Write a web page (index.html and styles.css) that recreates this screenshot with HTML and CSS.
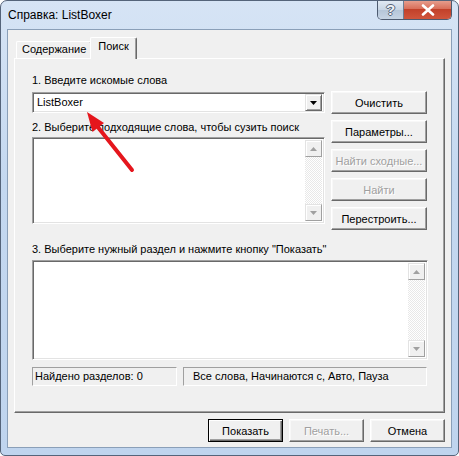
FILE: index.html
```html
<!DOCTYPE html>
<html lang="ru">
<head>
<meta charset="utf-8">
<title>Справка: ListBoxer</title>
<link rel="stylesheet" href="styles.css">
</head>
<body>
<div class="window">
  <div class="titlebar">
    <span class="title">Справка: ListBoxer</span>
    <div class="caption-btns">
      <div class="cbtn help">?</div>
      <div class="cbtn close">
        <svg width="16" height="12" viewBox="0 0 16 12"><path d="M3 1.5 L13 10.5 M13 1.5 L3 10.5" stroke="#fff" stroke-width="2.6" stroke-linecap="round"/></svg>
      </div>
    </div>
  </div>
  <div class="client">
    <div class="tabs">
      <div class="tab">Содержание</div>
      <div class="tab active">Поиск</div>
    </div>
    <div class="panel">
      <div class="top">
        <div class="leftcol">
          <div class="label l1">1. Введите искомые слова</div>
          <div class="combo sunken">
            <span class="combo-text">ListBoxer</span>
            <div class="drop"><svg width="7" height="4" viewBox="0 0 7 4"><path d="M0 0 H7 L3.5 4 Z" fill="#000"/></svg></div>
          </div>
          <div class="label l2">2. Выберите подходящие слова, чтобы сузить поиск</div>
          <div class="listbox lb2 sunken">
            <div class="vscroll">
              <div class="sbtn"><svg width="7" height="4" viewBox="0 0 7 4"><path d="M3.5 0 L7 4 H0 Z" fill="#a0a0a0"/></svg></div>
              <div class="track"></div>
              <div class="sbtn"><svg width="7" height="4" viewBox="0 0 7 4"><path d="M0 0 H7 L3.5 4 Z" fill="#a0a0a0"/></svg></div>
            </div>
          </div>
        </div>
        <div class="rightcol">
          <div class="btn">Очистить</div>
          <div class="btn">Параметры...</div>
          <div class="btn disabled">Найти сходные...</div>
          <div class="btn disabled">Найти</div>
          <div class="btn">Перестроить...</div>
        </div>
      </div>
      <div class="label l3">3. Выберите нужный раздел и нажмите кнопку "Показать"</div>
      <div class="listbox lb3 sunken">
        <div class="vscroll">
          <div class="sbtn"><svg width="7" height="4" viewBox="0 0 7 4"><path d="M3.5 0 L7 4 H0 Z" fill="#a0a0a0"/></svg></div>
          <div class="track"></div>
          <div class="sbtn"><svg width="7" height="4" viewBox="0 0 7 4"><path d="M0 0 H7 L3.5 4 Z" fill="#a0a0a0"/></svg></div>
        </div>
      </div>
      <div class="status">
        <div class="sbox s1">Найдено разделов: 0</div>
        <div class="sbox s2">Все слова, Начинаются с, Авто, Пауза</div>
      </div>
    </div>
    <div class="bottom">
      <div class="btn wide default">Показать</div>
      <div class="btn wide disabled">Печать...</div>
      <div class="btn wide">Отмена</div>
    </div>
  </div>
  <svg class="arrow" width="459" height="456" viewBox="0 0 459 456">
    <line x1="97" y1="126" x2="132" y2="170" stroke="#e5161d" stroke-width="4" stroke-linecap="round"/>
    <path d="M87 112 L104 123 L92.5 132 Z" fill="#e5161d"/>
  </svg>
</div>
</body>
</html>
```

FILE: styles.css
```css
* { box-sizing: border-box; }
html, body { margin: 0; padding: 0; background: #ffffff; }
body {
  font-family: "Liberation Sans", Arial, sans-serif;
  font-size: 11px;
  color: #000;
}
.window {
  position: relative;
  width: 459px;
  height: 456px;
  border: 1px solid #55647a;
  border-radius: 7px 7px 5px 5px;
  background: linear-gradient(#d6e4f5, #c4d8f0 40%, #bfd4ee);
  padding: 0 6px 7px 6px;
  display: flex;
  flex-direction: column;
  overflow: hidden;
}
.titlebar {
  height: 28px;
  flex: none;
  display: flex;
  align-items: flex-start;
}
.title {
  font-size: 12px;
  padding-left: 1px;
  margin-top: 7px;
  line-height: 15px;
  color: #000;
}
.caption-btns {
  margin-left: auto;
  margin-top: -1px;
  display: flex;
  height: 20px;
  border: 1px solid #4d5b70;
  border-top: none;
  border-radius: 0 0 5px 5px;
  overflow: hidden;
}
.cbtn {
  height: 19px;
  display: flex;
  align-items: center;
  justify-content: center;
}
.help {
  width: 26px;
  background: linear-gradient(#e3ebf4, #c9d6e5 50%, #b4c5d8 51%, #c6d4e4);
  border-right: 1px solid #6e7d92;
  color: #eef2f7;
  font-size: 15px;
  font-weight: bold;
  text-shadow: 1px 0 0 #5a6678, -1px 0 0 #5a6678, 0 1px 0 #5a6678, 0 -1px 0 #5a6678;
}
.close {
  width: 47px;
  background: linear-gradient(#e8a393, #d9705b 45%, #c2412a 50%, #d0553c);
}
.client {
  flex: 1;
  background: #f0f0f0;
  border: 1px solid #8a9fb8;
  display: flex;
  flex-direction: column;
  padding: 7px 6px 5px 6px;
}
.tabs {
  display: flex;
  height: 21px;
  align-items: flex-end;
  padding-left: 2px;
  position: relative;
  z-index: 1;
}
.tab {
  height: 17px;
  padding: 0 5px;
  border: 1px solid #fff;
  border-right-color: #696969;
  border-bottom: none;
  box-shadow: inset -1px 0 0 #a0a0a0;
  border-radius: 2px 2px 0 0;
  background: #f0f0f0;
  line-height: 15px;
}
.tab.active {
  margin-left: -2px;
  padding: 0 7px;
  line-height: 16px;
  margin-bottom: -1px;
  height: 22px;
}
.panel {
  height: 355px;
  flex: none;
  border: 1px solid;
  border-color: #fff #696969 #696969 #fff;
  box-shadow: inset -1px -1px 0 #a0a0a0;
  padding: 0 16px 0 17px;
  display: flex;
  flex-direction: column;
}
.top {
  display: flex;
  gap: 6px;
}
.leftcol {
  width: 293px;
  display: flex;
  flex-direction: column;
}
.label {
  line-height: 13px;
  white-space: nowrap;
}
.l1 { margin-top: 15px; }
.l2 { margin-top: 8px; }
.l3 { margin-top: 13px; }
.sunken {
  border: 1px solid;
  border-color: #a0a0a0 #fff #fff #a0a0a0;
  box-shadow: inset 1px 1px 0 #696969, inset -1px -1px 0 #e3e3e3;
  background: #fff;
}
.combo {
  margin-top: 5px;
  height: 21px;
  display: flex;
  align-items: center;
  padding: 2px 2px 2px 4px;
}
.combo-text { flex: 1; line-height: 13px; }
.drop {
  width: 17px;
  height: 17px;
  background: #f0f0f0;
  border: 1px solid;
  border-color: #e3e3e3 #696969 #696969 #e3e3e3;
  box-shadow: inset 1px 1px 0 #fff, inset -1px -1px 0 #a0a0a0;
  display: flex;
  align-items: center;
  justify-content: center;
}
.listbox {
  display: flex;
  justify-content: flex-end;
  padding: 2px;
}
.lb2 { margin-top: 3px; height: 87px; }
.lb3 { margin-top: 4px; height: 100px; }
.vscroll {
  width: 17px;
  display: flex;
  flex-direction: column;
}
.sbtn {
  height: 17px;
  flex: none;
  background: #f0f0f0;
  border: 1px solid;
  border-color: #e3e3e3 #a0a0a0 #a0a0a0 #e3e3e3;
  box-shadow: inset 1px 1px 0 #fff;
  display: flex;
  align-items: center;
  justify-content: center;
}
.track {
  flex: 1;
  background: repeating-conic-gradient(#ffffff 0 25%, #e8e8e8 0 50%) 0 0 / 2px 2px;
}
.rightcol {
  width: 96px;
  display: flex;
  flex-direction: column;
  gap: 6px;
  padding-top: 32px;
}
.btn {
  height: 23px;
  background: #f0f0f0;
  border: 1px solid;
  border-color: #fff #696969 #696969 #fff;
  box-shadow: inset -1px -1px 0 #a0a0a0, inset 1px 1px 0 #f8f8f8;
  display: flex;
  align-items: center;
  justify-content: center;
  white-space: nowrap;
}
.btn.disabled { color: #a0a0a0; text-shadow: 1px 1px 0 #fff; }
.btn.default {
  border: 1px solid #000;
  box-shadow: inset 1px 1px 0 #fff, inset -1px -1px 0 #696969, inset -2px -2px 0 #a0a0a0;
}
.status {
  margin-top: 7px;
  display: flex;
  gap: 6px;
  width: 395px;
}
.sbox {
  height: 19px;
  border: 1px solid;
  border-color: #a0a0a0 #fff #fff #a0a0a0;
  line-height: 17px;
  white-space: nowrap;
}
.s1 { width: 145px; padding-left: 2px; }
.s2 { flex: 1; padding-left: 9px; }
.bottom {
  margin-top: 6px;
  display: flex;
  justify-content: flex-end;
  gap: 6px;
}
.btn.wide { width: 75px; }
.arrow {
  position: absolute;
  left: -1px;
  top: -1px;
  pointer-events: none;
}
```
